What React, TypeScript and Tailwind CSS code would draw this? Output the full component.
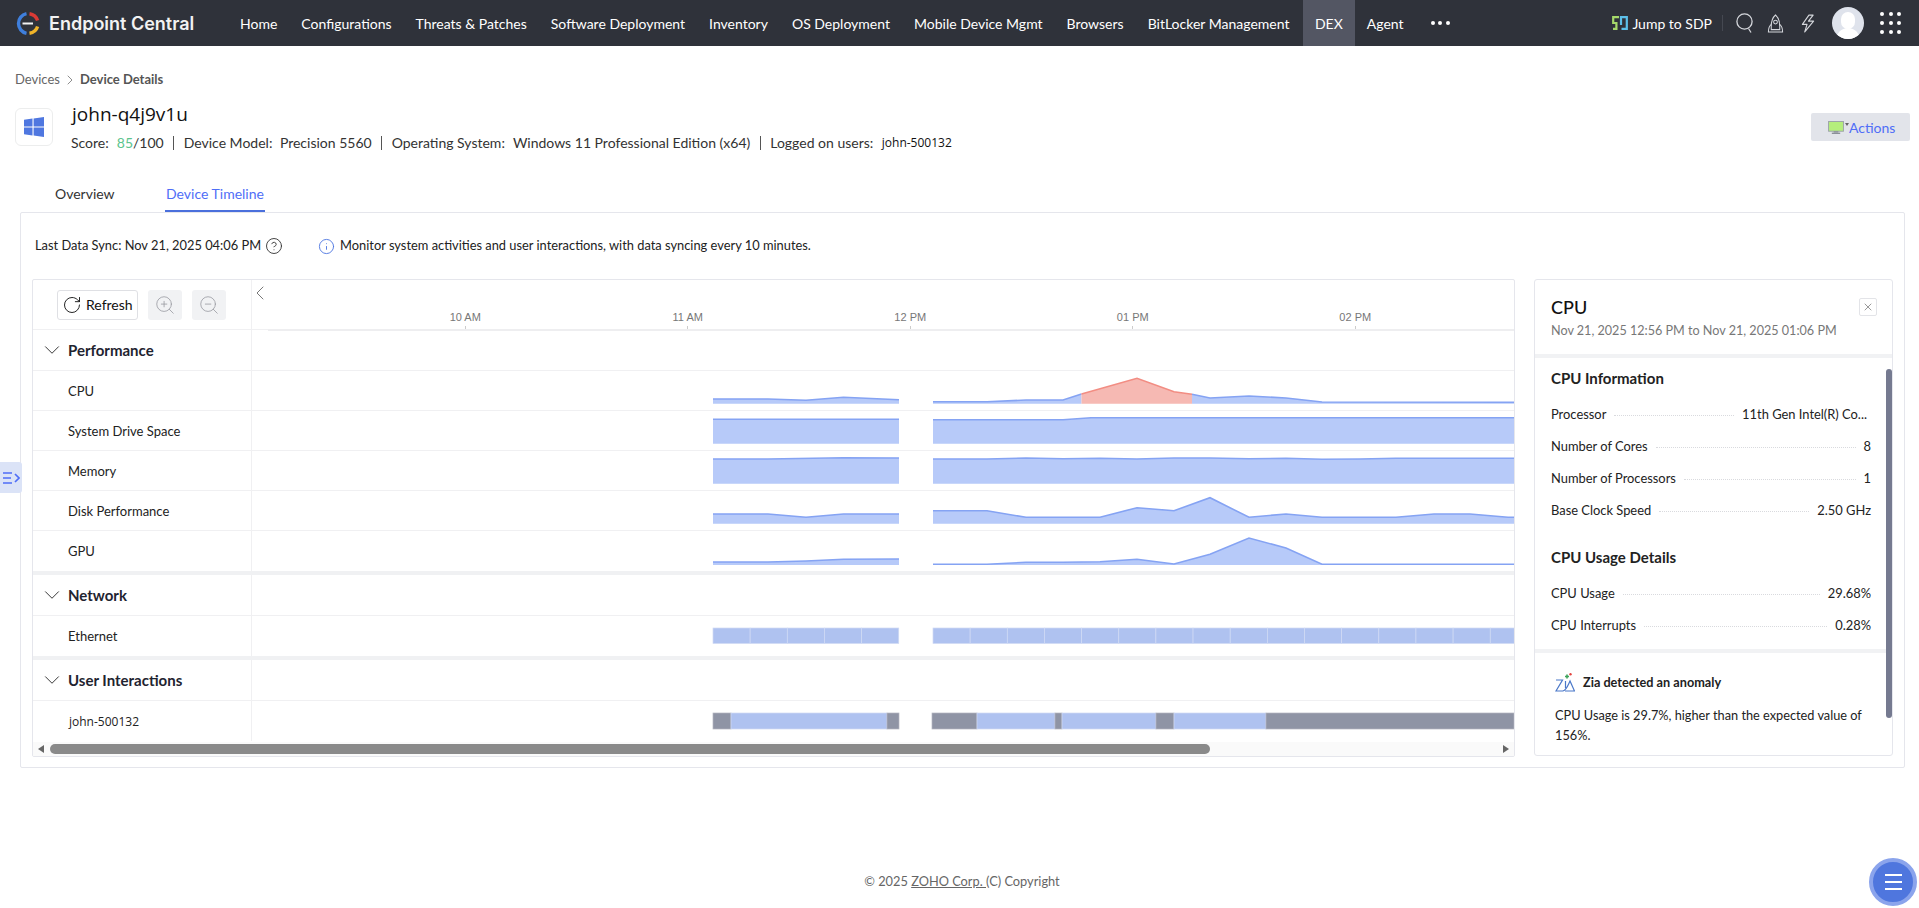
import React from "react";
import {
  ChevronDown,
  ChevronLeft,
  ChevronRight,
  CircleHelp,
  Info,
  RotateCw,
  X,
  ZoomIn,
  ZoomOut,
} from "lucide-react";

type Pt = [number, number];

const navItems = [
  "Home",
  "Configurations",
  "Threats & Patches",
  "Software Deployment",
  "Inventory",
  "OS Deployment",
  "Mobile Device Mgmt",
  "Browsers",
  "BitLocker Management",
  "DEX",
  "Agent",
];

// x is page px, y is px from the top of the 40px row
const cpu: { a: Pt[]; b: Pt[]; red: Pt[]; c: Pt[] } = {
  a: [[713, 29], [768, 29], [806, 30.3], [843.5, 27.3], [899, 29.7]],
  b: [[933, 31.7], [987, 31.7], [1026, 30], [1063, 30], [1081.5, 24]],
  red: [[1081.5, 24], [1137, 8.3], [1174, 21.7], [1192, 24.3]],
  c: [[1192, 24.3], [1210, 28], [1249, 26], [1286, 28], [1322, 32], [1514, 32.3]],
};

const charts: { name: string; base: number; segs: Pt[][] }[] = [
  {
    name: "System Drive Space",
    base: 33.7,
    segs: [
      [[713, 9.3], [899, 9.3]],
      [[933, 9.7], [1063, 9.7], [1091, 7.7], [1514, 7.7]],
    ],
  },
  {
    name: "Memory",
    base: 33.7,
    segs: [
      [[713, 9], [768, 9], [843.5, 7.7], [899, 8]],
      [[933, 9], [987, 9], [1026, 8], [1063, 8.7], [1100, 8.3], [1137, 9], [1174, 8], [1210, 8], [1249, 8.7], [1286, 8.3], [1322, 9.3], [1360, 9], [1396, 8.3], [1514, 8.3]],
    ],
  },
  {
    name: "Disk Performance",
    base: 33.7,
    segs: [
      [[713, 24], [768, 24], [806, 27.3], [843.5, 24], [899, 24]],
      [[933, 20.7], [987, 20.7], [1026, 27.3], [1100, 27.3], [1137, 17.7], [1174, 20.7], [1210, 7.7], [1249, 27.3], [1286, 24], [1322, 27.3], [1396, 27.3], [1434, 24], [1470, 24], [1508, 27.3], [1514, 27.3]],
    ],
  },
  {
    name: "GPU",
    base: 35,
    segs: [
      [[713, 32], [768, 32], [806, 31], [843.5, 29.3], [899, 29]],
      [[933, 34.3], [987, 34.3], [1026, 32.3], [1063, 32.3], [1100, 31.7], [1137, 29.3], [1174, 34], [1210, 24.3], [1249, 8], [1286, 18], [1322, 34.3], [1514, 34.3]],
    ],
  },
];

const ticks = ["10 AM", "11 AM", "12 PM", "01 PM", "02 PM"];

const userSegs: { x1: number; x2: number; idle: boolean }[] = [
  { x1: 713, x2: 731, idle: true },
  { x1: 731, x2: 887, idle: false },
  { x1: 887, x2: 899, idle: true },
  { x1: 932, x2: 977, idle: true },
  { x1: 977, x2: 1055, idle: false },
  { x1: 1055, x2: 1062, idle: true },
  { x1: 1062, x2: 1156, idle: false },
  { x1: 1156, x2: 1174, idle: true },
  { x1: 1174, x2: 1266, idle: false },
  { x1: 1266, x2: 1514, idle: true },
];

function toLine(pts: Pt[]) {
  return pts.map((p) => p.join(",")).join(" ");
}

function Area({ pts, base, red }: { pts: Pt[]; base: number; red?: boolean }) {
  const first = pts[0][0];
  const last = pts[pts.length - 1][0];
  return (
    <>
      <polygon
        points={`${first},${base} ${toLine(pts)} ${last},${base}`}
        fill={red ? "#f6b9b3" : "#b7caf9"}
      />
      <polyline
        points={toLine(pts)}
        fill="none"
        stroke={red ? "#f28d83" : "#85a3f3"}
        strokeWidth="1.6"
      />
    </>
  );
}

function Chart({ children }: { children: React.ReactNode }) {
  return (
    <svg viewBox="252 0 1262 40" className="w-[1262px] h-[40px] block -mt-px">
      {children}
    </svg>
  );
}

function GroupRow({ title }: { title: string }) {
  return (
    <div className="flex h-[40px]">
      <div className="w-[219px] shrink-0 border-r border-[#f0f0f2] flex items-center pl-[6px] pt-[1px]">
        <ChevronDown size={26} strokeWidth={0.9} className="text-[#333] mr-[3px] -mt-[2px]" />
        <span className="text-[15px] font-bold text-[#1f2430]">{title}</span>
      </div>
      <div className="flex-1" />
    </div>
  );
}

function MetricRow({
  name,
  mono,
  band,
  children,
}: {
  name: string;
  mono?: boolean;
  band?: boolean;
  children: React.ReactNode;
}) {
  return (
    <div className={"border-t border-[#f0f0f2]" + (band ? " border-b-4 border-b-[#f0f1f3]" : "")}>
      <div className={(band || mono ? "h-[40px]" : "h-[39px]") + " flex overflow-hidden"}>
        <div className="w-[219px] shrink-0 border-r border-[#f0f0f2] flex items-center pl-[35px] pt-[2px]">
          {mono ? (
            <span className="ml-[1px] text-[12px] text-[#222] [font-family:'Open_Sans',sans-serif]">{name}</span>
          ) : (
            <span className="text-[13px] text-[#222]">{name}</span>
          )}
        </div>
        <div className="flex-1">{children}</div>
      </div>
    </div>
  );
}

function InfoRow({ label, value, cut }: { label: string; value: string; cut?: boolean }) {
  return (
    <div className="flex items-center h-[32px] text-[12.9px] text-[#222]">
      <span className="shrink-0">{label}</span>
      <span className="flex-1 mx-[8px] border-b border-dotted border-[#d9dade]" />
      <span className={cut ? "shrink-0 pr-[4px]" : "shrink-0"}>{value}</span>
    </div>
  );
}

function Logo() {
  return (
    <svg viewBox="0 0 24 24" className="w-[24px] h-[25px] shrink-0" fill="none">
      <path d="M10.5 2.2 A10 10 0 0 0 10.5 21.8" stroke="#3f7fdc" strokeWidth="3.4" />
      <path d="M13.5 2.2 A10 10 0 0 1 21.6 9" stroke="#d93a35" strokeWidth="3.4" />
      <path d="M21.6 15 A10 10 0 0 1 13.5 21.8" stroke="#f0b429" strokeWidth="3.4" />
      <path d="M6.5 12 H17" stroke="#f2f2f2" strokeWidth="2" />
    </svg>
  );
}

function SdpIcon() {
  return (
    <svg viewBox="0 0 16 14" className="w-[16px] h-[14px] shrink-0" fill="none" strokeWidth="2.2">
      <path d="M7 1.2 H1.2 V7 H4.4 V12.8 H1" stroke="#a6d96a" />
      <path d="M9.5 12.8 H14.8 V1.2 H9 V9" stroke="#5dc0ea" />
    </svg>
  );
}

function RocketIcon() {
  return (
    <svg viewBox="0 0 18 20" className="w-[17px] h-[19px]" fill="none" stroke="#d5d7dc" strokeWidth="1.1">
      <path d="M9 1 C5.5 4 4.5 8 4.5 13 V16.5 H13.5 V13 C13.5 8 12.5 4 9 1 Z" />
      <circle cx="9" cy="8.5" r="2" />
      <path d="M4.5 11 C2 13 1.5 15.5 1.5 19 H16.5 C16.5 15.5 16 13 13.5 11" />
    </svg>
  );
}

function BoltIcon() {
  return (
    <svg viewBox="0 0 15 20" className="w-[14px] h-[19px]" fill="none" stroke="#d5d7dc" strokeWidth="1.2" strokeLinejoin="round">
      <path d="M8.5 1 L1.5 11 H6.5 L4 19 L13.5 7.5 H8 L13 1 Z" />
    </svg>
  );
}

function DotsGrid() {
  return (
    <div className="grid grid-cols-3 gap-x-[5px] gap-y-[5px] w-[21px]">
      {Array.from({ length: 9 }).map((_, i) => (
        <span key={i} className="w-[4px] h-[4px] bg-white rounded-full" />
      ))}
    </div>
  );
}

function ZiaIcon() {
  return (
    <svg viewBox="0 0 20 20" className="w-[20px] h-[20px] shrink-0" fill="none">
      <path d="M1 7 H7.5 L1 18 H8" stroke="#4b78c9" strokeWidth="1.2" />
      <path d="M10.5 8 V15" stroke="#4b78c9" strokeWidth="1.2" />
      <path d="M8 18 C11.5 17 13.5 11 15 8 L19.5 18 H10" stroke="#4b78c9" strokeWidth="1.2" />
      <path d="M10 3.5 H14 M12 1.5 V5.5" stroke="#3fa35c" strokeWidth="1.6" />
      <circle cx="15.5" cy="1.3" r="1.2" fill="#e3443f" />
    </svg>
  );
}

export default function App() {
  return (
    <div className="relative w-[1919px] h-[908px] overflow-hidden bg-white text-[#222] [font-family:Lato,sans-serif]">
      {/* top bar */}
      <header className="h-[46px] bg-[#2f323a] flex items-stretch">
        <div className="flex items-center pl-[16px] w-[228px] shrink-0">
          <Logo />
          <span className="ml-[9px] text-[18px] font-semibold text-[#f2f2f2] [font-family:Inter,sans-serif] whitespace-nowrap">
            Endpoint Central
          </span>
        </div>
        <nav className="flex items-stretch">
          {navItems.map((n) => (
            <div
              key={n}
              className={
                "px-[12px] flex items-center text-[14px] text-white whitespace-nowrap" +
                (n === "DEX" ? " bg-[#535663] ml-[1.5px]" : "")
              }
            >
              {n}
            </div>
          ))}
          <div className="pl-[15px] flex items-center gap-[3.5px]">
            <span className="w-[4px] h-[4px] rounded-full bg-white" />
            <span className="w-[4px] h-[4px] rounded-full bg-white" />
            <span className="w-[4px] h-[4px] rounded-full bg-white" />
          </div>
        </nav>
        <div className="ml-auto flex items-center pr-[18px]">
          <SdpIcon />
          <span className="ml-[4px] text-[14px] text-white">Jump to SDP</span>
          <span className="ml-[10px] w-px h-[16px] bg-[#454851]" />
          <svg viewBox="0 0 18 20" className="ml-[13px] w-[18px] h-[20px]" fill="none" stroke="#d5d7dc" strokeWidth="1.3">
            <circle cx="8.5" cy="8.5" r="7.6" />
            <path d="M12.5 15.5 L15 19.5" />
          </svg>
          <span className="ml-[13px] flex"><RocketIcon /></span>
          <span className="ml-[17px] flex"><BoltIcon /></span>
          <div className="ml-[17px] w-[32px] h-[32px] rounded-full bg-[#dfe3ec] overflow-hidden relative">
            <div className="absolute left-[9px] top-[5px] w-[14px] h-[17px] rounded-full bg-white" />
            <div className="absolute left-[4px] top-[21px] w-[24px] h-[14px] rounded-t-full bg-white" />
          </div>
          <div className="ml-[16px]"><DotsGrid /></div>
        </div>
      </header>

      {/* breadcrumb */}
      <div className="flex items-center h-[20px] mt-[24px] pl-[15px] text-[13px] text-[#666]">
        <span>Devices</span>
        <ChevronRight size={16} strokeWidth={1} className="mx-[2px] text-[#555]" />
        <span className="font-bold text-[#555]">Device Details</span>
      </div>

      {/* device info */}
      <div className="flex mt-[18px] h-[38px] pl-[15px] pr-[9px]">
        <div className="w-[38px] h-[38px] border border-[#eceded] rounded-[6px] flex items-center justify-center shrink-0">
          <svg viewBox="0 0 20 20" className="w-[20px] h-[20px]" fill="#4f77e0">
            <path d="M0 2.8 L8.5 1.6 V9.4 H0 Z M9.6 1.4 L20 0 V9.4 H9.6 Z M0 10.6 H8.5 V18.4 L0 17.2 Z M9.6 10.6 H20 V20 L9.6 18.6 Z" />
          </svg>
        </div>
        <div className="ml-[18px] -mt-[6px]">
          <div className="ml-[1px] text-[19px] leading-[24px] font-medium text-[#111] [font-family:'Open_Sans',sans-serif]">john-q4j9v1u</div>
          <div className="flex items-center mt-[7px] text-[14px] leading-[20px] text-[#333] whitespace-nowrap">
            <span>Score:</span>
            <span className="ml-[8px] text-[#5cc48d]">85</span>
            <span>/100</span>
            <span className="mx-[9.5px] w-px h-[14px] bg-[#555]" />
            <span>Device Model:</span>
            <span className="ml-[7.5px]">Precision 5560</span>
            <span className="mx-[9.5px] w-px h-[14px] bg-[#555]" />
            <span>Operating System:</span>
            <span className="ml-[8px]">Windows 11 Professional Edition (x64)</span>
            <span className="mx-[9.5px] w-px h-[14px] bg-[#555]" />
            <span>Logged on users:</span>
            <span className="ml-[8.5px] text-[12px] text-[#111] [font-family:'Open_Sans',sans-serif]">john-500132</span>
          </div>
        </div>
        <div className="ml-auto mt-[5px] w-[99px] h-[28px] bg-[#e2e4ea] rounded-[2px] flex items-center pl-[17px]">
          <svg viewBox="0 0 17 14" className="w-[16px] h-[13px] shrink-0">
            <rect x="0.5" y="0.5" width="16" height="10.5" fill="#b5ee7c" stroke="#9aa0a8" />
            <rect x="6" y="11" width="5" height="1.5" fill="#8b9098" />
            <rect x="4" y="12.5" width="9" height="1.5" fill="#8b9098" />
          </svg>
          <span className="ml-[1px] mb-[5px] w-0 h-0 border-x-[2px] border-x-transparent border-t-[3px] border-t-[#666]" />
          <span className="text-[14px] text-[#4f6ef7]">Actions</span>
        </div>
      </div>

      {/* tabs */}
      <div className="flex mt-[36px] h-[30px] pl-[55px] text-[14px]">
        <div className="w-[110px] leading-[24px] text-[#333]">Overview</div>
        <div className="w-[100px] text-center leading-[24px] text-[#4f6ef7] border-b-2 border-[#4a6fdc] z-10">Device Timeline</div>
      </div>

      {/* card */}
      <div className="mx-[20px] w-[1885px] h-[556px] border border-[#e5e6ec] rounded-[2px] px-[11px]">
        <div className="flex items-center h-[66px] pl-[3px] text-[12.85px] text-[#222]">
          <span>Last Data Sync: Nov 21, 2025 04:06 PM</span>
          <CircleHelp size={18} strokeWidth={1.2} className="ml-[4px] text-[#333]" />
          <Info size={17} strokeWidth={1.3} className="ml-[35px] text-[#4f77e0]" />
          <span className="ml-[5px]">Monitor system activities and user interactions, with data syncing every 10 minutes.</span>
        </div>

        <div className="flex items-start">
          {/* timeline */}
          <div className="w-[1483px] h-[478px] border border-[#e5e6ec] rounded-[2px] overflow-hidden">
            <div className="flex h-[50px] border-b border-[#f0f0f2]">
              <div className="w-[219px] shrink-0 border-r border-[#f0f0f2] flex items-start pt-[10px] pl-[24px] gap-[10px]">
                <div className="w-[81px] h-[30px] border border-[#dfe0e4] rounded-[3px] flex items-center pl-[4px] pb-[1px] gap-[4px] text-[14px] text-[#111]">
                  <RotateCw size={20} strokeWidth={1.1} />
                  <span>Refresh</span>
                </div>
                <div className="w-[34px] h-[30px] bg-[#f1f2f4] rounded-[3px] flex items-center justify-center">
                  <ZoomIn size={22} strokeWidth={0.9} className="text-[#9a9ca3]" />
                </div>
                <div className="w-[34px] h-[30px] bg-[#f1f2f4] rounded-[3px] flex items-center justify-center">
                  <ZoomOut size={22} strokeWidth={0.9} className="text-[#9a9ca3]" />
                </div>
              </div>
              <div className="flex-1 relative">
                <ChevronLeft size={24} strokeWidth={1} className="text-[#777] absolute left-[-4px] top-[1px]" />
                <div className="absolute left-[16px] right-0 bottom-[-2px] h-[2px] bg-[#eeeef0]" />
                <div className="absolute left-[102px] top-0 bottom-0 flex">
                  {ticks.map((t) => (
                    <div key={t} className="w-[222.5px] h-full flex flex-col items-center justify-end">
                      <span className="text-[11px] leading-[13px] mb-[2px] text-[#777] [font-family:'Liberation_Sans',sans-serif]">{t}</span>
                      <span className="w-px h-[3px] bg-[#ccc]" />
                    </div>
                  ))}
                </div>
              </div>
            </div>

            <GroupRow title="Performance" />
            <MetricRow name="CPU">
              <Chart>
                <Area pts={cpu.a} base={33.7} />
                <Area pts={cpu.b} base={33.7} />
                <Area pts={cpu.red} base={33.7} red />
                <Area pts={cpu.c} base={33.7} />
              </Chart>
            </MetricRow>
            {charts.map((c, i) => (
              <MetricRow key={c.name} name={c.name} band={i === charts.length - 1}>
                <Chart>
                  {c.segs.map((s, j) => (
                    <Area key={j} pts={s} base={c.base} />
                  ))}
                </Chart>
              </MetricRow>
            ))}

            <GroupRow title="Network" />
            <MetricRow name="Ethernet" band>
              <Chart>
                {[
                  [713, 5],
                  [933, 16],
                ].map(([start, n]) =>
                  Array.from({ length: n }).map((_, k) => (
                    <rect
                      key={`${start}-${k}`}
                      x={start + k * 37.15}
                      y="13"
                      width={start === 933 && k === 15 ? 24 : 37.15}
                      height="15.5"
                      fill="#afc2f0"
                      stroke="#d0daf4"
                      strokeWidth="0.7"
                    />
                  ))
                )}
              </Chart>
            </MetricRow>

            <GroupRow title="User Interactions" />
            <MetricRow name="john-500132" mono>
              <Chart>
                {userSegs.map((s) => (
                  <rect
                    key={s.x1}
                    x={s.x1}
                    y="13"
                    width={s.x2 - s.x1}
                    height="16"
                    fill={s.idle ? "#8f94a5" : "#afc2f0"}
                    stroke={s.idle ? "#b4b6c0" : "#d0daf4"}
                    strokeWidth="0.7"
                  />
                ))}
              </Chart>
            </MetricRow>

            {/* horizontal scroll */}
            <div className="h-[15px] bg-[#fafafa] flex items-center pl-[5px] pr-[5px] border-t border-white">
              <span className="w-0 h-0 border-y-[4px] border-y-transparent border-r-[6px] border-r-[#666]" />
              <span className="ml-[6px] w-[1160px] h-[10px] rounded-[5px] bg-[#8a8a8a]" />
              <span className="ml-auto w-0 h-0 border-y-[4px] border-y-transparent border-l-[6px] border-l-[#666]" />
            </div>
          </div>

          {/* right panel */}
          <div className="relative ml-[19px] w-[359px] h-[477px] border border-[#e5e6ec] rounded-[3px] overflow-hidden">
            <div className="h-[74px] pl-[16px] pr-[15px] pt-[14px] relative">
              <div className="text-[18px] leading-[26px] font-medium text-[#111]">CPU</div>
              <div className="text-[12.6px] leading-[20px] mt-[1px] text-[#777]">Nov 21, 2025 12:56 PM to Nov 21, 2025 01:06 PM</div>
              <div className="absolute right-[15px] top-[18px] w-[18px] h-[18px] border border-[#e3e4e8] rounded-[2px] flex items-center justify-center">
                <X size={12} strokeWidth={1} className="text-[#333]" />
              </div>
            </div>
            <div className="h-[4px] bg-[#f1f2f4]" />
            <div className="pl-[16px] pr-[21px]">
              <div className="text-[15px] leading-[20px] font-bold text-[#222] mt-[10px] mb-[11px]">CPU Information</div>
              <InfoRow label="Processor" value="11th Gen Intel(R) Co..." cut />
              <InfoRow label="Number of Cores" value="8" />
              <InfoRow label="Number of Processors" value="1" />
              <InfoRow label="Base Clock Speed" value="2.50 GHz" />
              <div className="text-[15px] leading-[20px] font-bold text-[#222] mt-[20px] mb-[11px]">CPU Usage Details</div>
              <InfoRow label="CPU Usage" value="29.68%" />
              <InfoRow label="CPU Interrupts" value="0.28%" />
            </div>
            <div className="h-[4px] bg-[#f1f2f4] mt-[7px]" />
            <div className="pl-[20px] pr-[24px]">
              <div className="flex items-center gap-[8px] mt-[20px]">
                <ZiaIcon />
                <span className="text-[12.7px] font-bold text-[#222]">Zia detected an anomaly</span>
              </div>
              <p className="mt-[12px] text-[12.75px] leading-[20px] text-[#222]">
                CPU Usage is 29.7%, higher than the expected value of 156%.
              </p>
            </div>
            <div className="absolute right-0 top-[89px] w-[6px] h-[349px] rounded-[3px] bg-[#757a90]" />
          </div>
        </div>
      </div>

      {/* footer */}
      <div className="mt-[103px] pl-[5px] text-center text-[12.8px] leading-[20px] text-[#666]">
        © 2025 <span className="underline">ZOHO Corp. </span>(C) Copyright
      </div>

      {/* side tab */}
      <div className="absolute left-0 top-[462px] w-[22px] h-[31px] bg-[#dbe3f7] rounded-r-[3px] flex items-center justify-center">
        <svg viewBox="0 0 18 12" className="w-[18px] h-[12px]" fill="none" stroke="#4f6ef7" strokeWidth="1.7">
          <path d="M1 1 H10 M1 6 H9 M1 11 H10 M13 2 L17 6 L13 10" />
        </svg>
      </div>

      {/* floating menu */}
      <div className="absolute left-[1869px] top-[858px] w-[48px] h-[48px] rounded-full bg-[#4f76de] border-4 border-[#8ba4ec] flex flex-col items-center justify-center gap-[5px]">
        <span className="w-[17px] h-[2px] bg-white" />
        <span className="w-[17px] h-[2px] bg-white" />
        <span className="w-[17px] h-[2px] bg-white" />
      </div>
    </div>
  );
}
